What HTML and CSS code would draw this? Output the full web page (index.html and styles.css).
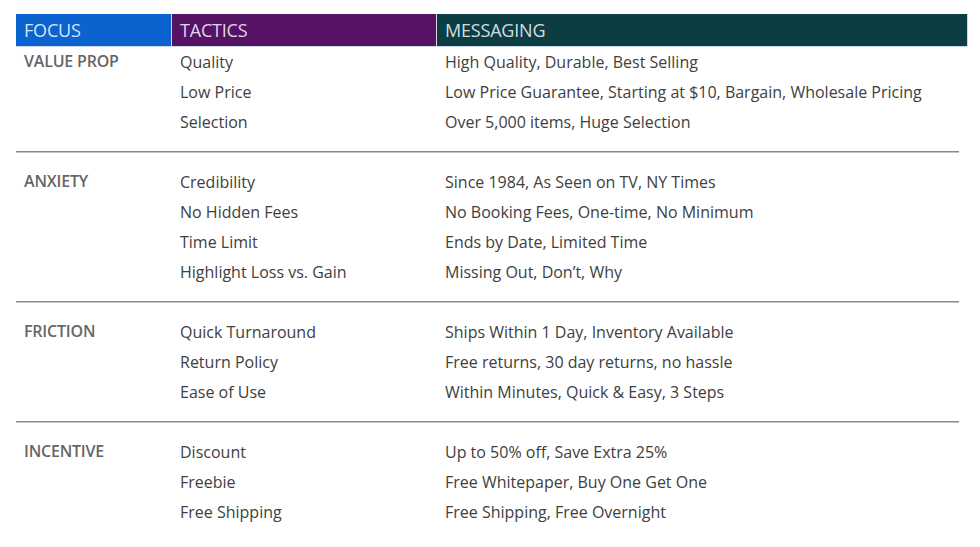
FILE: index.html
```html
<!DOCTYPE html>
<html>
<head>
<meta charset="utf-8">
<link rel="stylesheet" href="styles.css">
</head>
<body>
<div class="page">
  <div class="head">
    <div class="hcell focus">FOCUS</div>
    <div class="hcell tactics">TACTICS</div>
    <div class="hcell messaging">MESSAGING</div>
  </div>

  <div class="group">
    <div class="label">VALUE PROP</div>
    <div class="col">
      <div>Quality</div><div>Low Price</div><div>Selection</div>
    </div>
    <div class="col">
      <div>High Quality, Durable, Best Selling</div>
      <div>Low Price Guarantee, Starting at $10, Bargain, Wholesale Pricing</div>
      <div>Over 5,000 items, Huge Selection</div>
    </div>
  </div>
  <div class="sep"></div>

  <div class="group">
    <div class="label">ANXIETY</div>
    <div class="col">
      <div>Credibility</div><div>No Hidden Fees</div><div>Time Limit</div><div>Highlight Loss vs. Gain</div>
    </div>
    <div class="col">
      <div>Since 1984, As Seen on TV, NY Times</div>
      <div>No Booking Fees, One-time, No Minimum</div>
      <div>Ends by Date, Limited Time</div>
      <div>Missing Out, Don’t, Why</div>
    </div>
  </div>
  <div class="sep"></div>

  <div class="group">
    <div class="label">FRICTION</div>
    <div class="col">
      <div>Quick Turnaround</div><div>Return Policy</div><div>Ease of Use</div>
    </div>
    <div class="col">
      <div>Ships Within 1 Day, Inventory Available</div>
      <div>Free returns, 30 day returns, no hassle</div>
      <div>Within Minutes, Quick &amp; Easy, 3 Steps</div>
    </div>
  </div>
  <div class="sep"></div>

  <div class="group">
    <div class="label">INCENTIVE</div>
    <div class="col">
      <div>Discount</div><div>Freebie</div><div>Free Shipping</div>
    </div>
    <div class="col">
      <div>Up to 50% off, Save Extra 25%</div>
      <div>Free Whitepaper, Buy One Get One</div>
      <div>Free Shipping, Free Overnight</div>
    </div>
  </div>
</div>
</body>
</html>
```

FILE: styles.css
```css
html, body {
  margin: 0;
  padding: 0;
  background: #ffffff;
}

.page {
  padding: 14px 12px 0 16px;
  font-family: "Open Sans", "Noto Sans", sans-serif;
  font-size: 16px;
  color: #404040;
}

.head,
.group {
  display: grid;
  grid-template-columns: 156px 265px 1fr;
}

.head {
  height: 33px;
}

.hcell {
  color: rgba(255, 255, 255, 0.84);
  font-size: 18px;
  line-height: 32px;
  padding-left: 8px;
  border-bottom: 1px solid #c9d6e3;
  border-right: 1px solid #dcd3e4;
  letter-spacing: -0.2px;
}

.hcell.focus { background: #0b63cf; }
.hcell.tactics { background: #561265; }
.hcell.messaging { background: #0b3d42; border-right: 1px solid #c9d6e3; }

.label {
  font-weight: 600;
  color: #666666;
  letter-spacing: -0.2px;
  padding-left: 8px;
  line-height: 29px;
}

.col {
  padding-left: 8px;
  line-height: 30px;
}

.sep {
  height: 1px;
  background: #8a8a8a;
  border-bottom: 1px solid #c4c4c4;
  margin: 14px 9px 14px 0;
}
```
